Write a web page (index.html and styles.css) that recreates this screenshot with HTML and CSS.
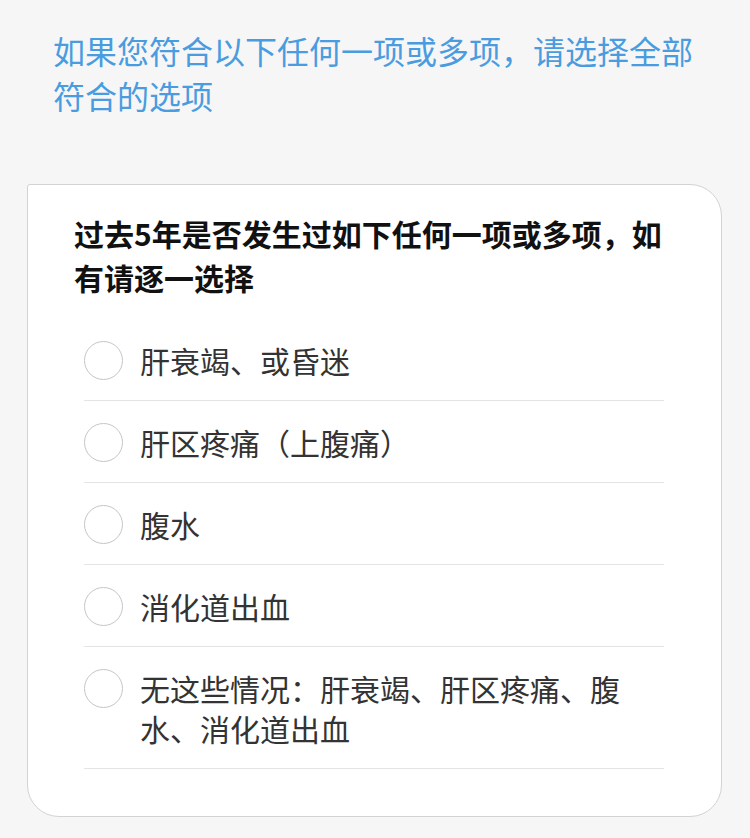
FILE: index.html
```html
<!DOCTYPE html>
<html lang="zh-CN">
<head>
<meta charset="utf-8">
<title>问卷</title>
<link rel="stylesheet" href="styles.css">
</head>
<body>
<div class="page">
  <div class="intro">如果您符合以下任何一项或多项，请选择全部符合的选项</div>
  <div class="card">
    <div class="question">过去5年是否发生过如下任何一项或多项，如有请逐一选择</div>
    <ul class="options">
      <li class="option"><span class="radio"></span><span class="label">肝衰竭、或昏迷</span></li>
      <li class="option"><span class="radio"></span><span class="label">肝区疼痛（上腹痛）</span></li>
      <li class="option"><span class="radio"></span><span class="label">腹水</span></li>
      <li class="option"><span class="radio"></span><span class="label">消化道出血</span></li>
      <li class="option"><span class="radio"></span><span class="label">无这些情况：肝衰竭、肝区疼痛、腹水、消化道出血</span></li>
    </ul>
  </div>
</div>
</body>
</html>
```

FILE: styles.css
```css
html, body {
  margin: 0;
  padding: 0;
  background: #f6f6f6;
}
body {
  font-family: "Noto Sans CJK SC", "Noto Sans", sans-serif;
  width: 750px;
  height: 838px;
  overflow: hidden;
}
.page {
  padding-top: 28px;
}
.intro {
  padding: 0 53px;
  font-size: 32px;
  line-height: 45px;
  color: #4a9ce0;
}
.card {
  margin: 66px 0 0 27px;
  width: 693px;
  background: #fff;
  border: 1.5px solid #d3d3d3;
  border-radius: 3px 32px 32px 32px;
  padding: 26px 0 47px 0;
}
.question {
  padding: 0 46px;
  font-size: 30px;
  line-height: 44px;
  font-weight: bold;
  color: #111;
}
.options {
  list-style: none;
  margin: 20px 57px 0 56px;
  padding: 0;
}
.option {
  display: flex;
  align-items: flex-start;
  gap: 17px;
  padding: 21px 0 20px 0;
  border-bottom: 1px solid #e4e4e4;
}
.radio {
  flex: none;
  box-sizing: border-box;
  width: 39px;
  height: 39px;
  margin-top: 1px;
  border: 1.5px solid #c6c6c6;
  border-radius: 50%;
  background: #fff;
}
.label {
  flex: 1;
  padding-right: 30px;
  font-size: 30px;
  line-height: 40px;
  color: #333;
}
```
